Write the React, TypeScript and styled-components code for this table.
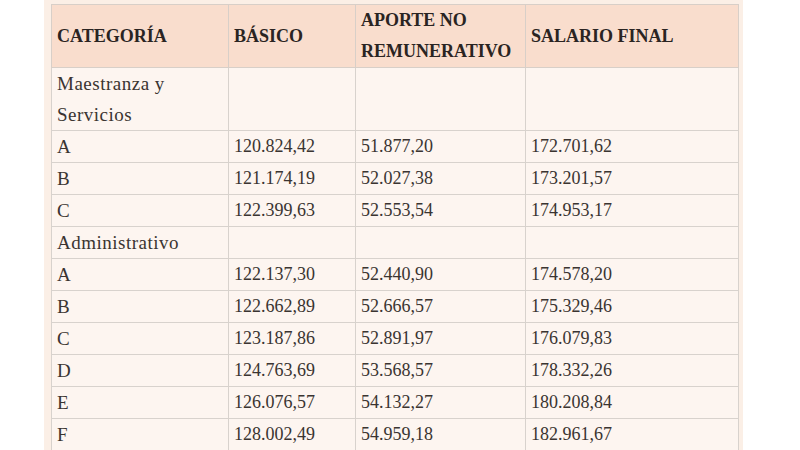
import React from 'react'
import styled, { createGlobalStyle } from 'styled-components'

type Row = { cat: React.ReactNode; basico?: string; aporte?: string; final?: string }

const rows: Array<Row> = [
  { cat: <>Maestranza y<br />Servicios</> },
  { cat: 'A', basico: '120.824,42', aporte: '51.877,20', final: '172.701,62' },
  { cat: 'B', basico: '121.174,19', aporte: '52.027,38', final: '173.201,57' },
  { cat: 'C', basico: '122.399,63', aporte: '52.553,54', final: '174.953,17' },
  { cat: 'Administrativo' },
  { cat: 'A', basico: '122.137,30', aporte: '52.440,90', final: '174.578,20' },
  { cat: 'B', basico: '122.662,89', aporte: '52.666,57', final: '175.329,46' },
  { cat: 'C', basico: '123.187,86', aporte: '52.891,97', final: '176.079,83' },
  { cat: 'D', basico: '124.763,69', aporte: '53.568,57', final: '178.332,26' },
  { cat: 'E', basico: '126.076,57', aporte: '54.132,27', final: '180.208,84' },
  { cat: 'F', basico: '128.002,49', aporte: '54.959,18', final: '182.961,67' },
]

const serif = `"Liberation Serif", "DejaVu Serif", serif`

const App = () => {
  return (
    <>
      <GlobalStyle />
      <Panel>
        <Table>
          <colgroup>
            <col style={{ width: 177 }} />
            <col style={{ width: 127 }} />
            <col style={{ width: 170 }} />
            <col style={{ width: 213 }} />
          </colgroup>
          <thead>
            <tr>
              <Th>CATEGORÍA</Th>
              <Th>BÁSICO</Th>
              <Th>APORTE NO REMUNERATIVO</Th>
              <Th>SALARIO FINAL</Th>
            </tr>
          </thead>
          <tbody>
            {rows.map((row, i) => (
              <tr key={i}>
                <Td $label>{row.cat}</Td>
                <Td>{row.basico}</Td>
                <Td>{row.aporte}</Td>
                <Td>{row.final}</Td>
              </tr>
            ))}
          </tbody>
        </Table>
      </Panel>
    </>
  )
}

const GlobalStyle = createGlobalStyle`
  body {
    margin: 0;
    background: #ffffff;
    overflow: hidden;
    font-family: ${serif};
  }
`

const Panel = styled.div`
  margin-left: 44px;
  width: 699px;
  height: 450px;
  box-sizing: border-box;
  padding: 4px 5px 0 7px;
  background: #fbefe6;
`

const Table = styled.table`
  width: 687px;
  table-layout: fixed;
  border-collapse: collapse;
`

const Th = styled.th`
  background: #f9ddcd;
  border: 1px solid #d8cfc8;
  padding: 0 5px;
  text-align: left;
  font-family: ${serif};
  font-size: 18px;
  font-weight: 700;
  line-height: 31px;
  color: #2a2422;
`

const Td = styled.td<{ $label?: boolean }>`
  background: #fdf5f0;
  border: 1px solid #d8d2cd;
  padding: 0 5px;
  font-family: ${serif};
  font-size: ${p => (p.$label ? '19px' : '18px')};
  letter-spacing: ${p => (p.$label ? '0.5px' : '0')};
  line-height: 31px;
  color: #3a3431;
  vertical-align: top;
`

export default App
